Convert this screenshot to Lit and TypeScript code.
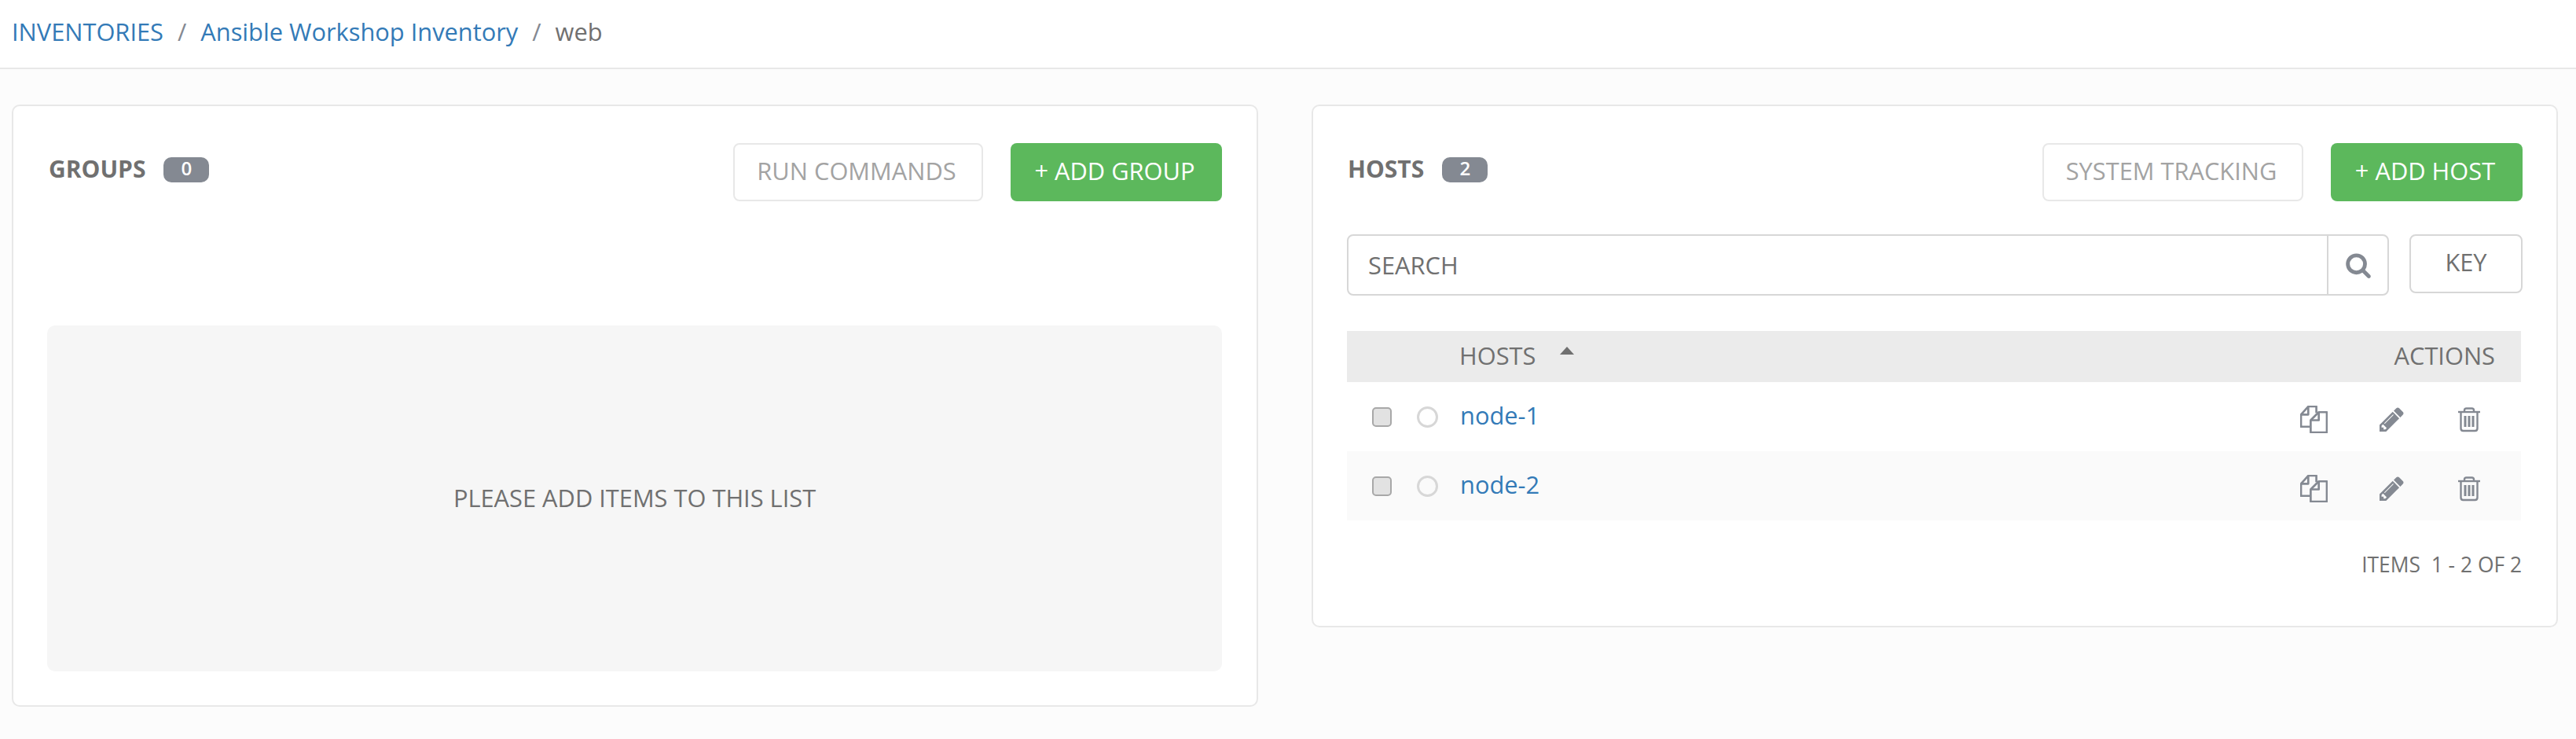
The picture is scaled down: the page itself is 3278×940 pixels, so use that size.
import { html, css, LitElement, svg } from "lit";
import { customElement } from "lit/decorators.js";

const searchIcon = svg`<path d="M1216 832q0-185-131.5-316.5t-316.5-131.5-316.5 131.5-131.5 316.5 131.5 316.5 316.5 131.5 316.5-131.5 131.5-316.5zm512 832q0 52-38 90t-90 38q-54 0-90-38l-343-342q-179 124-399 124-143 0-273.5-55.5t-225-150-150-225-55.5-273.5 55.5-273.5 150-225 225-150 273.5-55.5 273.5 55.5 225 150 150 225 55.5 273.5q0 220-124 399l343 343q37 37 37 90z"/>`;
const pencilIcon = svg`<path d="M491 1536l91-91-235-235-91 91v107h128v128h107zm523-928q0-22-22-22-10 0-17 7l-542 542q-7 7-7 17 0 22 22 22 10 0 17-7l542-542q7-7 7-17zm-54-192l416 416-832 832h-416v-416zm683 96q0 53-37 90l-166 166-416-416 166-165q36-38 90-38 53 0 91 38l235 234q37 39 37 91z"/>`;

const hosts = ["node-1", "node-2"];

@customElement("app-root")
export class AppRoot extends LitElement {
  static styles = css`
    :host {
      display: block;
      min-height: 940px;
      background: #fcfcfc;
      font-family: "Open Sans", sans-serif;
      font-size: 30.8px;
      color: #707070;
    }
    a {
      color: #337ab7;
      text-decoration: none;
    }
    .crumbs {
      box-sizing: border-box;
      height: 88px;
      padding: 0 15px 6px;
      display: flex;
      align-items: center;
      gap: 18px;
      background: #fff;
      border-bottom: 2px solid #e8e8e8;
    }
    .sep {
      color: #848992;
    }
    .cards {
      display: grid;
      grid-template-columns: 1586px 1586px;
      gap: 68px;
      align-items: start;
      padding: 45px 15px 0;
    }
    .card {
      box-sizing: border-box;
      background: #fff;
      border: 2px solid #e8e8e8;
      border-radius: 10px;
      padding: 47px 44px 0 43px;
    }
    .left {
      height: 766px;
    }
    .right {
      height: 665px;
      padding-right: 43px;
    }
    .head {
      display: flex;
      align-items: center;
      height: 74px;
    }
    .title {
      font-size: 30px;
      font-weight: 700;
      margin: 0 23px 9px 2px;
    }
    .right .title {
      margin-left: 1px;
    }
    .badge {
      box-sizing: border-box;
      width: 58px;
      height: 32px;
      margin-bottom: 6px;
      border-radius: 10px;
      background: #848992;
      color: #fff;
      font-size: 24px;
      font-weight: 600;
      line-height: 27px;
      text-align: center;
    }
    .actions {
      margin-left: auto;
      display: flex;
      gap: 35px;
    }
    .btn {
      box-sizing: border-box;
      height: 74px;
      padding: 0 4px 5px 0;
      display: flex;
      align-items: center;
      justify-content: center;
      border-radius: 8px;
    }
    .ghost {
      border: 2px solid #e8e8e8;
      color: #a3a3a3;
      background: #fff;
    }
    .add {
      background: #5cb85c;
      color: #fff;
    }
    .w-run {
      width: 318px;
    }
    .w-group {
      width: 269px;
    }
    .w-track {
      width: 332px;
    }
    .w-host {
      width: 244px;
    }
    .empty {
      box-sizing: border-box;
      margin-top: 158px;
      height: 440px;
      padding-bottom: 3px;
      border-radius: 10px;
      background: #f6f6f6;
      display: flex;
      align-items: center;
      justify-content: center;
    }
    .search-row {
      display: flex;
      align-items: flex-start;
      margin-top: 42px;
      gap: 26px;
    }
    .search {
      box-sizing: border-box;
      width: 1326px;
      height: 78px;
      display: flex;
      border: 2px solid #d7d7d7;
      border-radius: 8px;
    }
    .search-text {
      flex: 1;
      padding-left: 25px;
      line-height: 74px;
    }
    .search-btn {
      box-sizing: border-box;
      width: 77px;
      border-left: 2px solid #d7d7d7;
      display: flex;
      align-items: center;
      justify-content: center;
    }
    .search-btn svg {
      width: 34px;
      height: 34px;
      fill: #848992;
    }
    .key {
      width: 144px;
      height: 75px;
      padding: 0 0 5px;
      border: 2px solid #d7d7d7;
      color: #707070;
    }
    .table {
      margin-top: 45px;
      width: 1494px;
    }
    .thead,
    .row {
      display: flex;
      align-items: center;
    }
    .thead {
      box-sizing: border-box;
      height: 65px;
      padding-bottom: 3px;
      background: #ebebeb;
    }
    .col-name {
      margin-left: 143px;
    }
    .caret {
      width: 0;
      height: 0;
      margin: -12px 0 0 31px;
      border-left: 9px solid transparent;
      border-right: 9px solid transparent;
      border-bottom: 10px solid #707070;
    }
    .col-actions {
      margin-left: auto;
      padding-right: 33px;
    }
    .row {
      height: 88px;
    }
    .row:nth-child(odd) {
      background: #fafafa;
    }
    .check {
      box-sizing: border-box;
      width: 25px;
      height: 25px;
      margin-left: 32px;
      border: 2px solid #a8a8a8;
      border-radius: 5px;
      background: #e2e2e2;
    }
    .dot {
      box-sizing: border-box;
      width: 27px;
      height: 27px;
      margin-left: 32px;
      border: 3px solid #d7d7d7;
      border-radius: 50%;
    }
    .row a {
      margin: 0 0 4px 28px;
    }
    .icons {
      margin: 7px 0 0 auto;
      display: flex;
      align-items: center;
      padding-right: 52px;
    }
    .icons svg {
      display: block;
    }
    .i-copy {
      width: 35px;
      height: 35px;
      fill: none;
      stroke: #848992;
      stroke-width: 2.6;
      stroke-linejoin: round;
    }
    .i-pencil {
      width: 31px;
      height: 31px;
      margin-left: 66px;
      fill: #848992;
    }
    .i-trash {
      width: 28px;
      height: 32px;
      margin-left: 69px;
      fill: none;
      stroke: #848992;
      stroke-width: 2.4;
    }
    .count {
      margin-top: 38px;
      padding-right: 1px;
      text-align: right;
      font-size: 26.4px;
      white-space: pre;
    }
  `;

  copyIcon() {
    return html`<svg class="i-copy" viewBox="1 1 34 34">
      <path d="M13 27H2V12L11 2H21V10" />
      <path d="M2 12H11V2" />
      <path d="M14 19L24 9H34V34H14Z" />
      <path d="M14 19H24V9" />
    </svg>`;
  }

  trashIcon() {
    return html`<svg class="i-trash" viewBox="0 0 28 32">
      <path d="M0 6H28" />
      <path d="M3.500 6V27Q3.500 30 6.500 30H21.500Q24.500 30 24.500 27V6" />
      <path d="M8 6V4Q8 1.500 10.500 1.500H17.500Q20 1.500 20 4V6" />
      <path d="M9 11V25M14 11V25M19 11V25" stroke-width="3" />
    </svg>`;
  }

  renderRow(name: string) {
    return html`<div class="row">
      <span class="check"></span>
      <span class="dot"></span>
      <a href="#">${name}</a>
      <div class="icons">
        ${this.copyIcon()}
        <svg class="i-pencil" viewBox="128 128 1540 1540">${pencilIcon}</svg>
        ${this.trashIcon()}
      </div>
    </div>`;
  }

  render() {
    return html`
      <nav class="crumbs">
        <a href="#">INVENTORIES</a>
        <span class="sep">/</span>
        <a href="#">Ansible Workshop Inventory</a>
        <span class="sep">/</span>
        <span>web</span>
      </nav>
      <div class="cards">
        <section class="card left">
          <div class="head">
            <span class="title">GROUPS</span>
            <span class="badge">0</span>
            <div class="actions">
              <div class="btn ghost w-run">RUN COMMANDS</div>
              <div class="btn add w-group">+ ADD GROUP</div>
            </div>
          </div>
          <div class="empty">PLEASE ADD ITEMS TO THIS LIST</div>
        </section>
        <section class="card right">
          <div class="head">
            <span class="title">HOSTS</span>
            <span class="badge">2</span>
            <div class="actions">
              <div class="btn ghost w-track">SYSTEM TRACKING</div>
              <div class="btn add w-host">+ ADD HOST</div>
            </div>
          </div>
          <div class="search-row">
            <div class="search">
              <div class="search-text">SEARCH</div>
              <div class="search-btn">
                <svg viewBox="0 0 1792 1792">${searchIcon}</svg>
              </div>
            </div>
            <div class="btn key">KEY</div>
          </div>
          <div class="table">
            <div class="thead">
              <span class="col-name">HOSTS</span>
              <span class="caret"></span>
              <span class="col-actions">ACTIONS</span>
            </div>
            ${hosts.map((h) => this.renderRow(h))}
          </div>
          <div class="count">ITEMS  1 - 2 OF 2</div>
        </section>
      </div>
    `;
  }
}
